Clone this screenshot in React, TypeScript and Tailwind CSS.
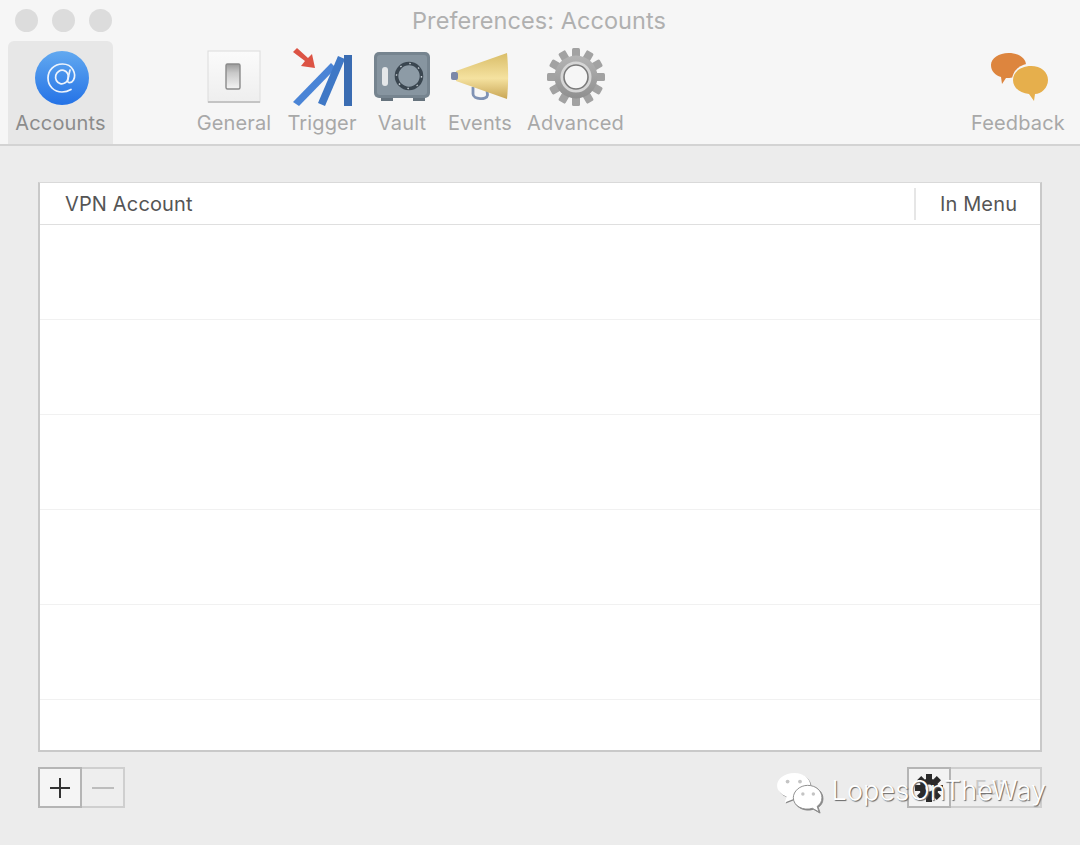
import React from "react";

function AtIcon() {
  return (
    <svg width="56" height="56" viewBox="0 0 56 56">
      <defs>
        <linearGradient id="atg" x1="0" y1="0" x2="0" y2="1">
          <stop offset="0" stopColor="#62a9f0" />
          <stop offset="1" stopColor="#2472e6" />
        </linearGradient>
      </defs>
      <circle cx="28" cy="28" r="27" fill="url(#atg)" />
      <g fill="none" stroke="#eef4fc" strokeWidth="1.7" strokeLinecap="round">
        <ellipse cx="28" cy="27" rx="6.4" ry="6.8" transform="rotate(15 28 27)" />
        <path d="M36 20 L33.6 30 C33 33.5 37.5 33.5 39.5 30 C42.5 24.5 39 14 28.5 14 C20 14 14 20.5 14 28 C14 36 20 42 28 42 C31.5 42 34.5 41 37 39.5" />
      </g>
    </svg>
  );
}

function SwitchIcon() {
  return (
    <svg width="54" height="54" viewBox="0 0 54 54">
      <defs>
        <linearGradient id="swg" x1="0" y1="0" x2="0" y2="1">
          <stop offset="0" stopColor="#fbfbfb" />
          <stop offset="1" stopColor="#eeeeee" />
        </linearGradient>
        <linearGradient id="swi" x1="0" y1="0" x2="0" y2="1">
          <stop offset="0" stopColor="#9a9a9a" />
          <stop offset="0.35" stopColor="#c9c9c9" />
          <stop offset="1" stopColor="#f4f4f4" />
        </linearGradient>
      </defs>
      <rect x="1" y="1" width="52" height="51" fill="url(#swg)" stroke="#dcdcdc" />
      <rect x="1" y="51" width="52" height="2" fill="#c4c4c4" />
      <rect x="19" y="14" width="14" height="25" rx="1.5" fill="url(#swi)" stroke="#8a8a8a" strokeWidth="1.4" />
    </svg>
  );
}

function TriggerIcon() {
  return (
    <svg width="62" height="62" viewBox="0 0 62 62">
      <path d="M2 6 L6 2 L17 12 L21 8 L24 22 L10 20 L14 15 Z" fill="#dc5344" />
      <path d="M2 56 L40 17 L45 22 L8 60 Z" fill="#4a84d6" />
      <path d="M27 57 L47 10 L54 13 L34 60 Z" fill="#3f78c6" />
      <rect x="53" y="9" width="8" height="51" fill="#3a6cb2" />
    </svg>
  );
}

function VaultIcon() {
  return (
    <svg width="58" height="52" viewBox="0 0 58 52">
      <rect x="1" y="1" width="56" height="46" rx="5" fill="#76848f" />
      <rect x="4" y="4" width="50" height="40" rx="3" fill="#8795a0" />
      <rect x="8" y="47" width="12" height="3" fill="#66737d" />
      <rect x="40" y="47" width="12" height="3" fill="#66737d" />
      <rect x="9" y="16" width="6" height="19" rx="3" fill="#e4e7e9" />
      <circle cx="36" cy="25" r="12.5" fill="#8d9ba6" stroke="#3a4650" strokeWidth="3.6" />
      <circle cx="36" cy="25" r="12.5" fill="none" stroke="#c3cbd1" strokeWidth="1.4" strokeDasharray="1.6 8.2" />
    </svg>
  );
}

function HornIcon() {
  return (
    <svg width="62" height="52" viewBox="0 0 62 52">
      <defs>
        <linearGradient id="hng" x1="0" y1="0" x2="0" y2="1">
          <stop offset="0" stopColor="#d9bd68" />
          <stop offset="0.55" stopColor="#f5e2a0" />
          <stop offset="1" stopColor="#c9a655" />
        </linearGradient>
      </defs>
      <path d="M24 36 L24 43 C24 48.5 38 49.5 38.5 44 L38 39" fill="none" stroke="#7f92b4" strokeWidth="2.8" />
      <path d="M7 20 L58 2 C59.5 16 59.5 34 58 48 L7 30 Z" fill="url(#hng)" />
      <rect x="2" y="21" width="7" height="8" rx="2" fill="#7c88a8" />
    </svg>
  );
}

function GearIcon() {
  const teeth = Array.from({ length: 12 }, (_, i) => i * 30);
  return (
    <svg width="60" height="60" viewBox="0 0 60 60">
      <defs>
        <linearGradient id="grg" x1="0" y1="0" x2="0" y2="1">
          <stop offset="0" stopColor="#b4b4b4" />
          <stop offset="1" stopColor="#8f8f8f" />
        </linearGradient>
      </defs>
      {teeth.map((a) => (
        <rect key={a} x="26" y="1" width="8" height="12" rx="1.5" fill="#a2a2a2" transform={`rotate(${a} 30 30)`} />
      ))}
      <circle cx="30" cy="30" r="21.5" fill="url(#grg)" />
      <circle cx="30" cy="30" r="15.5" fill="#d6d6d6" />
      <circle cx="30" cy="30" r="12" fill="#f6f6f6" stroke="#7a7a7a" strokeWidth="1.6" />
    </svg>
  );
}

function BubblesIcon() {
  return (
    <svg width="60" height="50" viewBox="0 0 60 50">
      <path d="M18.5 1 C28 1 36 6 36 13 C36 21 27 26 16 26 L12 32 L11 25 C5 23 1 19 1 13 C1 6 9 1 18.5 1 Z" fill="#dd853e" />
      <ellipse cx="41" cy="28" rx="19" ry="16.5" fill="#f6f6f6" />
      <path d="M41 14 C51 14 58 20 58 28 C58 36 51 42 45 42 L44 49 L39 42 C30 41 23 36 23 28 C23 20 31 14 41 14 Z" fill="#e6af4c" />
    </svg>
  );
}

function WeChatIcon() {
  return (
    <svg width="48" height="42" viewBox="0 0 50 44" className="drop-shadow-[1px_1px_0_rgba(90,90,90,0.7)]">
      <path d="M19 1 C29 1 36 7 36 15 C36 23 28 28 19 28 L9 32 L11 26 C4 23 1 19 1 14 C1 7 9 1 19 1 Z" fill="#fff" />
      <path d="M33 14 C42 14 48 20 48 27 C48 31 46 34 43 36 L45 42 L38 38 C29 41 18 36 18 27 C18 20 25 14 33 14 Z" fill="#fff" stroke="#8c8c8c" strokeWidth="1" />
      <circle cx="12" cy="10" r="2" fill="#c4c4c4" />
      <circle cx="25" cy="10" r="2" fill="#c4c4c4" />
      <circle cx="28" cy="23" r="1.8" fill="#c4c4c4" />
      <circle cx="39" cy="23" r="1.8" fill="#c4c4c4" />
    </svg>
  );
}

function SmallGear() {
  const teeth = Array.from({ length: 8 }, (_, i) => i * 45);
  return (
    <svg width="28" height="30" viewBox="0 0 28 30">
      {teeth.map((a) => (
        <rect key={a} x="11" y="1" width="6" height="8" fill="#2b2b2b" transform={`rotate(${a} 14 15)`} />
      ))}
      <circle cx="14" cy="15" r="9.5" fill="#2b2b2b" />
      <circle cx="14" cy="15" r="3.5" fill="#f4f4f4" />
    </svg>
  );
}

function ToolItem({ label, icon, className }: { label: string; icon: React.ReactNode; className: string }) {
  return (
    <div className={`flex flex-col items-center ${className}`}>
      <div className="flex h-[66px] items-center justify-center pt-[6px]">{icon}</div>
      <div className="mt-[2px] text-[20px] leading-[28px] tracking-[0.15px] text-[#a8a8a8] whitespace-nowrap">{label}</div>
    </div>
  );
}

const rows = [95, 95, 95, 95, 95];

export default function App() {
  return (
    <div className="flex h-[845px] w-[1080px] flex-col overflow-hidden bg-[#ececec] font-['Inter','Liberation_Sans',sans-serif]">
      <header className="h-[146px] shrink-0 border-b-2 border-[#d3d3d3] bg-[#f6f6f6]">
        <div className="relative flex h-[41px] items-center justify-center">
          <div className="absolute left-[15px] top-[9px] flex gap-[14px]">
            <span className="h-[23px] w-[23px] rounded-full bg-[#dcdcdc]" />
            <span className="h-[23px] w-[23px] rounded-full bg-[#dcdcdc]" />
            <span className="h-[23px] w-[23px] rounded-full bg-[#dcdcdc]" />
          </div>
          <div className="-ml-[2px] text-[23.5px] leading-none tracking-[0.06px] text-[#b0b0b0]">Preferences: Accounts</div>
        </div>
        <div className="flex h-[103px] items-stretch pl-[8px] pr-[14px]">
          <div className="flex w-[105px] flex-col items-center rounded-t-[6px] bg-[#e7e7e7]">
            <div className="flex h-[68px] items-center justify-center pt-[6px] pl-[2px]">
              <AtIcon />
            </div>
            <div className="text-[20px] leading-[28px] tracking-[0.15px] text-[#8c8c8c]">Accounts</div>
          </div>
          <div className="ml-[77px] flex">
            <ToolItem label="General" icon={<SwitchIcon />} className="w-[88px]" />
            <ToolItem label="Trigger" icon={<TriggerIcon />} className="w-[88px]" />
            <ToolItem label="Vault" icon={<VaultIcon />} className="w-[72px]" />
            <ToolItem label="Events" icon={<HornIcon />} className="w-[84px]" />
            <ToolItem label="Advanced" icon={<GearIcon />} className="w-[107px]" />
          </div>
          <ToolItem label="Feedback" icon={<div className="pl-[3px]"><BubblesIcon /></div>} className="ml-auto w-[96px]" />
        </div>
      </header>

      <main className="flex flex-1 flex-col px-[38px] pt-[36px]">
        <div className="flex h-[570px] flex-col overflow-hidden border-2 border-t border-[#c9c9c9] border-t-[#d9d9d9] bg-white">
          <div className="flex h-[42px] shrink-0 items-center border-b border-[#dfdfdf] text-[20px] tracking-[0.15px] text-[#555555]">
            <div className="flex-1 pl-[25px]">VPN Account</div>
            <div className="flex h-[32px] w-[126px] items-center justify-center border-l-2 border-[#e6e6e6] pl-[1px]">In Menu</div>
          </div>
          {rows.map((h, i) => (
            <div key={i} style={{ height: h }} className="shrink-0 border-b border-[#f1f1f1]" />
          ))}
        </div>

        <div className="relative mt-[15px] flex justify-between">
          <div className="flex h-[41px]">
            <div className="flex w-[44px] items-center justify-center border-2 border-[#b5b5b5] bg-[#f5f5f5]">
              <svg width="22" height="22" viewBox="0 0 22 22">
                <path d="M11 1 V21 M1 11 H21" stroke="#333" strokeWidth="2" />
              </svg>
            </div>
            <div className="flex w-[43px] items-center justify-center border-2 border-l-0 border-[#cfcfcf] bg-[#eeeeee]">
              <svg width="22" height="4" viewBox="0 0 22 4">
                <path d="M0 2 H22" stroke="#bdbdbd" strokeWidth="2" />
              </svg>
            </div>
          </div>
          <div className="flex h-[41px]">
            <div className="flex w-[44px] items-center justify-center border-2 border-[#b5b5b5] bg-[#f3f3f3]">
              <SmallGear />
            </div>
            <div className="flex w-[91px] items-center justify-center border-2 border-l-0 border-[#cfcfcf] bg-[#eeeeee] pr-[6px] text-[20px] text-[#c9c9c9]">
              Edit
            </div>
          </div>
          <div className="absolute right-[-4px] top-[5px] flex items-center gap-[8px]">
            <WeChatIcon />
            <span className="-mt-[4px] text-[27px] leading-[36px] font-light tracking-[0.1px] text-white [text-shadow:1px_1px_1px_#666]">LopesOnTheWay</span>
          </div>
        </div>
      </main>
    </div>
  );
}
